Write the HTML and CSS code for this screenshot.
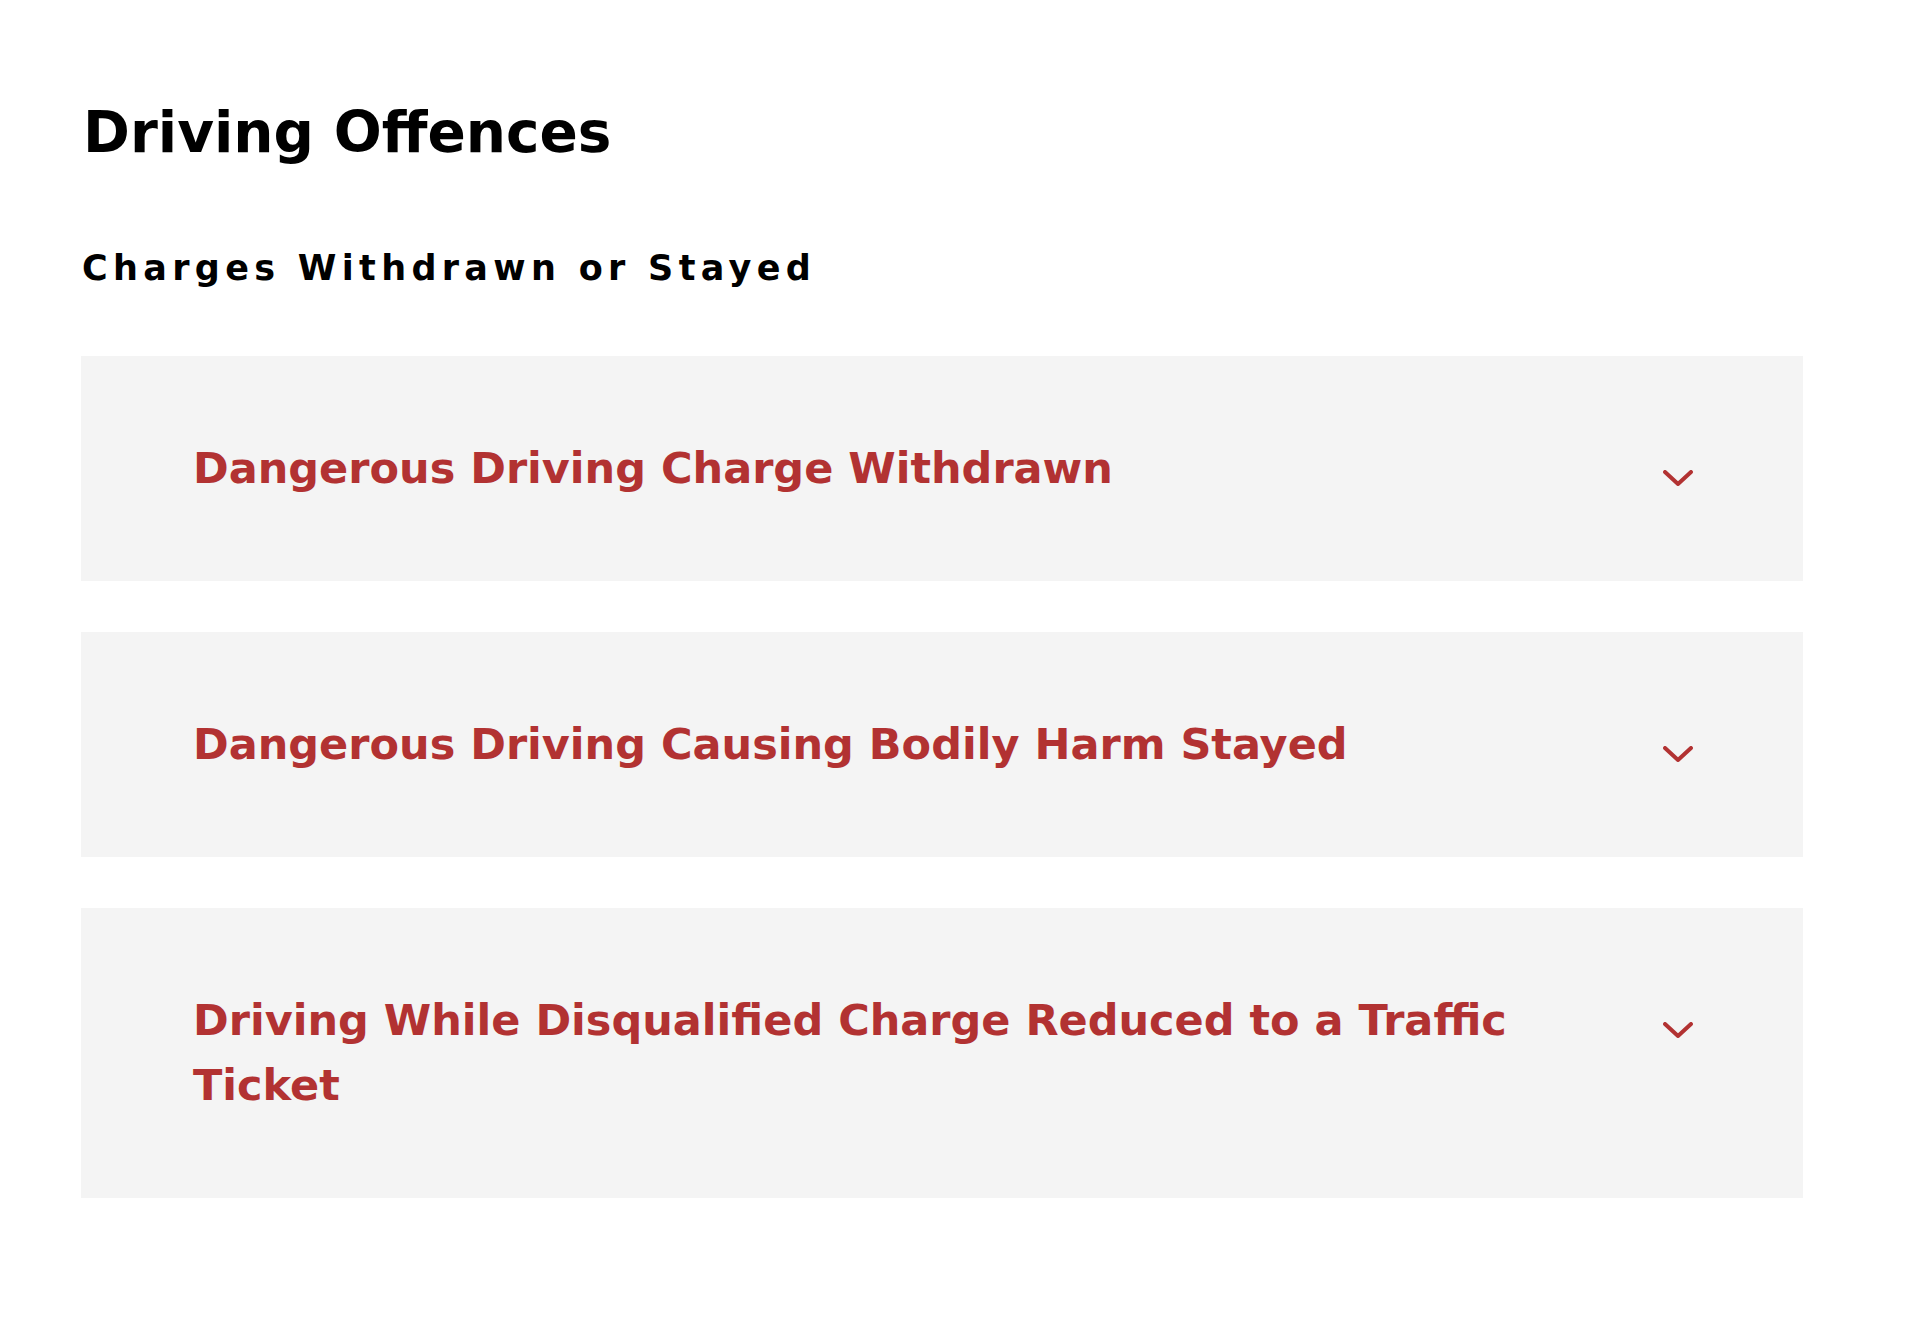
FILE: index.html
```html
<!DOCTYPE html>
<html lang="en">
<head>
<meta charset="utf-8">
<title>Driving Offences</title>
<link rel="stylesheet" href="styles.css">
</head>
<body>
<main class="section">
  <h1 class="title">Driving Offences</h1>
  <h2 class="subtitle">Charges Withdrawn or Stayed</h2>
  <div class="accordion">
    <div class="item">
      <h3 class="item-title">Dangerous Driving Charge Withdrawn</h3>
      <svg class="chevron" width="30" height="16" viewBox="0 0 30 16"><polyline points="2,2 15,14 28,2" fill="none" stroke="#b23232" stroke-width="4" stroke-linecap="round" stroke-linejoin="round"/></svg>
    </div>
    <div class="item">
      <h3 class="item-title">Dangerous Driving Causing Bodily Harm Stayed</h3>
      <svg class="chevron" width="30" height="16" viewBox="0 0 30 16"><polyline points="2,2 15,14 28,2" fill="none" stroke="#b23232" stroke-width="4" stroke-linecap="round" stroke-linejoin="round"/></svg>
    </div>
    <div class="item">
      <h3 class="item-title">Driving While Disqualified Charge Reduced to a Traffic Ticket</h3>
      <svg class="chevron" width="30" height="16" viewBox="0 0 30 16"><polyline points="2,2 15,14 28,2" fill="none" stroke="#b23232" stroke-width="4" stroke-linecap="round" stroke-linejoin="round"/></svg>
    </div>
  </div>
</main>
</body>
</html>
```

FILE: styles.css
```css
html, body {
  margin: 0;
  padding: 0;
  background: #ffffff;
}
body {
  font-family: "DejaVu Sans", "Noto Sans", sans-serif;
  color: #000000;
}
.section {
  width: 1722px;
  padding: 98px 0 100px 81px;
}
.title {
  margin: 0;
  font-size: 56.5px;
  line-height: 70px;
  font-weight: 700;
  padding-left: 2px;
}
.subtitle {
  margin: 80px 0 0 0;
  font-size: 35px;
  line-height: 40px;
  font-weight: 700;
  letter-spacing: 0.152em;
  padding-left: 1px;
}
.accordion {
  margin-top: 68px;
  display: flex;
  flex-direction: column;
  gap: 51px;
}
.item {
  background: #f4f4f4;
  display: flex;
  align-items: flex-start;
  padding: 80px 110px 80px 112px;
}
.item-title {
  flex: 1;
  margin: 0;
  font-size: 43px;
  line-height: 65px;
  font-weight: 700;
  color: #b23232;
  padding-right: 120px;
}
.chevron {
  flex: none;
  margin-top: 34px;
}
```
